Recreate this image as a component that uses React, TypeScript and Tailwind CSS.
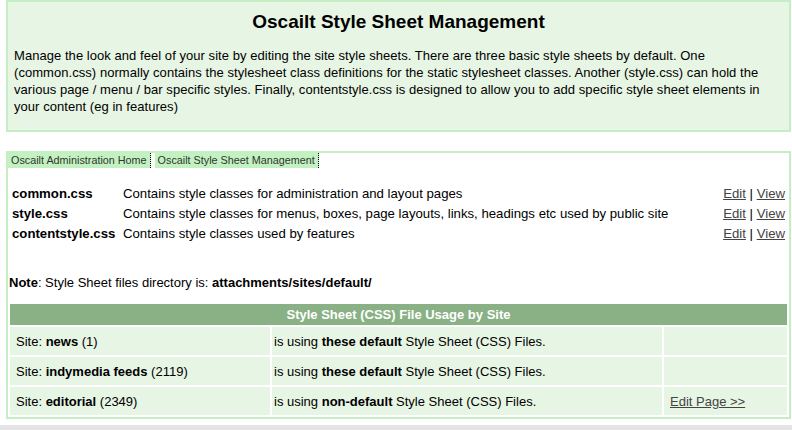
import React from "react";

const files = [
  { name: "common.css", desc: "Contains style classes for administration and layout pages" },
  { name: "style.css", desc: "Contains style classes for menus, boxes, page layouts, links, headings etc used by public site" },
  { name: "contentstyle.css", desc: "Contains style classes used by features" },
];

const sites = [
  { name: "news", id: "1", kind: "these default", edit: false },
  { name: "indymedia feeds", id: "2119", kind: "these default", edit: false },
  { name: "editorial", id: "2349", kind: "non-default", edit: true },
];

export default function App() {
  return (
    <div className="relative h-[430px] w-[792px] overflow-hidden bg-white text-[13px] leading-[17px] text-black [font-family:'Liberation_Sans',Arial,sans-serif]">
      <div className="ml-[6px] h-[132px] w-[785px] border-2 border-[#c6eec4] bg-[#e7f5e4] px-[6px]">
        <h1 className="pt-[8px] text-center text-[19px] font-bold leading-[23px]">
          Oscailt Style Sheet Management
        </h1>
        <p className="mt-[14px] whitespace-nowrap tracking-[0.05px]">
          Manage the look and feel of your site by editing the site style sheets. There are three basic style sheets by default. One
          <br />
          (common.css) normally contains the stylesheet class definitions for the static stylesheet classes. Another (style.css) can hold the
          <br />
          various page / menu / bar specific styles. Finally, contentstyle.css is designed to allow you to add specific style sheet elements in
          <br />
          your content (eg in features)
        </p>
      </div>

      <div className="ml-[6px] mt-[19px] h-[268px] w-[785px] border-2 border-[#c6eec4] bg-white">
        <div className="flex text-[10.8px] leading-[15px] text-[#333]">
          <span className="border-r border-dotted border-black bg-[#c2f2bf] px-[3px]">Oscailt Administration Home</span>
          <span className="ml-[4px] border-r border-dotted border-black bg-[#c2f2bf] px-[3px]">Oscailt Style Sheet Management</span>
        </div>

        <div className="mt-[15px] flex flex-col px-[4px] text-[13.2px]">
          {files.map((f) => (
            <div key={f.name} className="flex h-[20px] items-center">
              <span className="w-[111px] font-bold">{f.name}</span>
              <span className="flex-1">{f.desc}</span>
              <span className="text-[#444]">
                <span className="underline">Edit</span> <span className="text-black">|</span> <span className="underline">View</span>
              </span>
            </div>
          ))}
        </div>

        <p className="mt-[31px] pl-px">
          <span className="font-bold">Note</span>: Style Sheet files directory is: <span className="font-bold">attachments/sites/default/</span>
        </p>

        <div className="ml-[2px] mt-[13px] w-[777px]">
          <div className="flex h-[21px] items-center justify-center bg-[#8ab185] font-bold text-white">
            Style Sheet (CSS) File Usage by Site
          </div>
          {sites.map((s) => (
            <div key={s.name} className="mt-[2px] flex h-[28px] gap-[2px]">
              <div className="flex w-[260px] items-center bg-[#e7f5e4] px-[6px]">
                Site:&nbsp;<span className="font-bold">{s.name}</span>&nbsp;({s.id})
              </div>
              <div className="flex w-[390px] items-center bg-[#e7f5e4] px-[2px]">
                is using&nbsp;<span className="font-bold">{s.kind}</span>&nbsp;Style Sheet (CSS) Files.
              </div>
              <div className="flex flex-1 items-center bg-[#e7f5e4] px-[6px] text-[#444]">
                {s.edit && <span className="underline">Edit Page &gt;&gt;</span>}
              </div>
            </div>
          ))}
        </div>
      </div>

      <div className="absolute bottom-0 left-0 h-[5px] w-full bg-[#e4e4e4]" />
    </div>
  );
}
